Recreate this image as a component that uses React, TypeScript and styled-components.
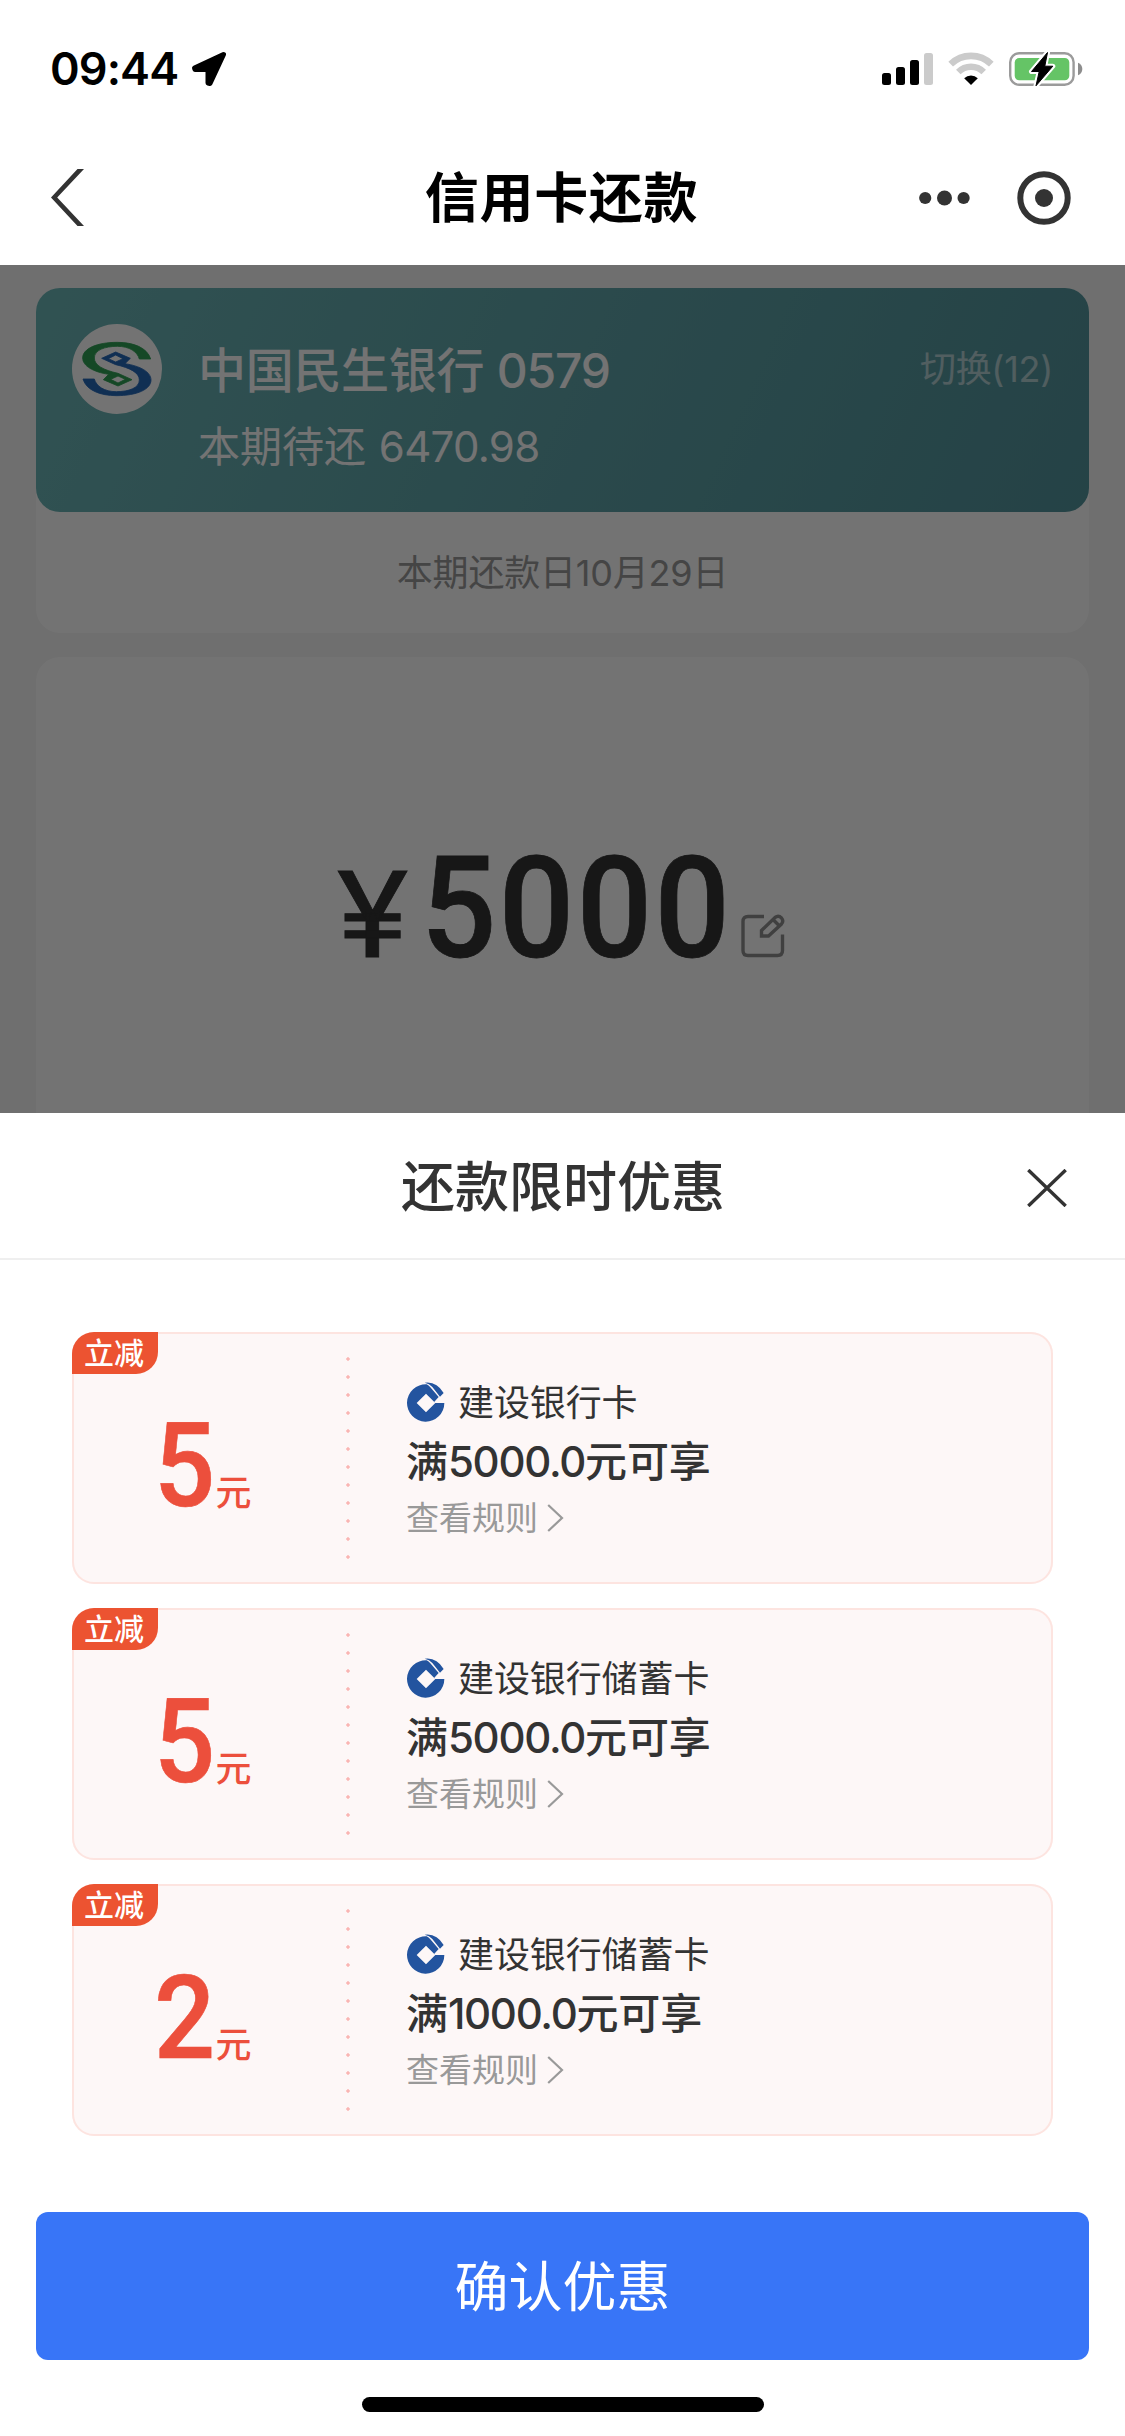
import React from 'react';
import styled, { createGlobalStyle } from 'styled-components';

const GlobalStyle = createGlobalStyle`
  * { box-sizing: border-box; }
  body {
    margin: 0;
    background: #fff;
    font-family: Inter, "Noto Sans CJK SC", sans-serif;
    color: #333;
  }
`;

const Screen = styled.div`
  display: flex;
  flex-direction: column;
  width: 1125px;
  height: 2436px;
  overflow: hidden;
  background: #fff;
`;

/* Status bar */

const StatusBar = styled.header`
  display: flex;
  align-items: center;
  justify-content: space-between;
  height: 138px;
  padding: 0 42px 0 50px;
  color: #000;
`;

const ClockGroup = styled.div`
  display: flex;
  align-items: center;
  gap: 13px;
`;

const Clock = styled.span`
  font-size: 45px;
  font-weight: 600;
  line-height: 54px;
  letter-spacing: -0.9px;
`;

const StatusIcons = styled.div`
  display: flex;
  align-items: center;
  gap: 15px;
`;

/* Navigation bar */

const NavBar = styled.nav`
  display: grid;
  grid-template-columns: 250px 1fr 250px;
  align-items: center;
  height: 127px;
  padding: 0 54px 8px 50px;
`;

const NavTitle = styled.h1`
  margin: 0;
  padding: 3px 0 0 2px;
  text-align: center;
  font-size: 54px;
  font-weight: 600;
  line-height: 72px;
  letter-spacing: 0.7px;
  color: #000;
`;

const NavActions = styled.div`
  display: flex;
  align-items: center;
  justify-content: flex-end;
  gap: 47px;
`;

/* Dimmed page content */

const Content = styled.main`
  position: relative;
  display: flex;
  flex-direction: column;
  gap: 24px;
  height: 848px;
  padding: 23px 36px 0;
  overflow: hidden;
  background: #f5f5f5;
`;

const Mask = styled.div`
  position: absolute;
  inset: 0;
  background: rgba(0, 0, 0, 0.55);
`;

const BillCard = styled.section`
  flex: none;
  height: 345px;
  border-radius: 24px;
  background: #fff;
`;

const BankPanel = styled.div`
  display: flex;
  align-items: flex-start;
  height: 224px;
  padding: 36px 36px 0;
  border-radius: 24px;
  background: linear-gradient(114deg, #6cb6b7 0%, #5fa4a9 50%, #52949c 100%);
  color: #fff;
`;

const BankInfo = styled.div`
  display: flex;
  flex-direction: column;
  flex: 1;
  gap: 21px;
  padding: 17px 0 0 36px;
`;

const Digits = styled.span<{ $tracking: number }>`
  letter-spacing: ${({ $tracking }) => $tracking}px;
`;

const BankName = styled.div`
  font-size: 48px;
  font-weight: 500;
  line-height: 60px;
  letter-spacing: -0.3px;
`;

const DueAmount = styled.div`
  font-size: 42px;
  font-weight: 400;
  line-height: 50px;
  word-spacing: 1px;
`;

const SwitchLink = styled.span`
  padding-top: 21px;
  font-size: 36px;
  line-height: 48px;
  letter-spacing: -0.3px;
  opacity: 0.55;
`;

const DueDate = styled.div`
  display: flex;
  align-items: center;
  justify-content: center;
  height: 121px;
  padding-bottom: 5px;
  font-size: 36px;
  letter-spacing: -0.2px;
  color: #999;
`;

const AmountCard = styled.section`
  display: flex;
  align-items: flex-end;
  flex: none;
  height: 500px;
  padding: 0 0 161px 301px;
  gap: 9px;
  border-radius: 24px;
  background: #fff;
`;

const Amount = styled.div`
  display: flex;
  align-items: baseline;
  font-family: Roboto, sans-serif;
  font-weight: 500;
  line-height: 160px;
  color: #333;
`;

const Yen = styled.span`
  width: 84px;
  font-size: 121px;
  font-weight: 400;
  -webkit-text-stroke: 0.8px currentColor;
  transform: scaleX(1.12);
  transform-origin: left center;
`;

const AmountValue = styled.span`
  margin-right: -20px;
  font-size: 141px;
  letter-spacing: 2.7px;
  -webkit-text-stroke: 0.8px currentColor;
  transform: scaleX(0.94);
  transform-origin: left center;
`;

const EditSlot = styled.span`
  display: flex;
  padding-bottom: 38px;
`;

/* Bottom sheet */

const Sheet = styled.section`
  display: flex;
  flex-direction: column;
  flex: 1;
  background: #fff;
`;

const SheetHeader = styled.div`
  display: grid;
  grid-template-columns: 100px 1fr 100px;
  align-items: center;
  height: 147px;
  padding: 0 58px;
  border-bottom: 2px solid #efefef;
`;

const SheetTitle = styled.h2`
  grid-column: 2;
  margin: 0;
  padding: 5px 0 0 1px;
  text-align: center;
  font-size: 54px;
  font-weight: 500;
  line-height: 72px;
  color: #333;
`;

const CloseButton = styled.button`
  justify-self: end;
  display: flex;
  padding: 4px 0 0;
  border: 0;
  background: none;
`;

const CouponList = styled.ul`
  display: flex;
  flex-direction: column;
  gap: 24px;
  margin: 0;
  padding: 72px 72px 0;
  list-style: none;
`;

const Coupon = styled.li`
  position: relative;
  display: grid;
  grid-template-columns: 276px 1fr;
  height: 252px;
  border-radius: 22px;
  background: #fdf7f7;
  box-shadow: inset 0 0 0 2px #fde4e0;
`;

const Badge = styled.span`
  position: absolute;
  top: 0;
  left: 0;
  width: 86px;
  height: 42px;
  padding-right: 2px;
  border-radius: 22px 0 22px 0;
  background: #ec5331;
  color: #fff;
  font-size: 30px;
  font-weight: 500;
  line-height: 43px;
  text-align: center;
`;

const Discount = styled.div`
  display: flex;
  align-items: baseline;
  height: 252px;
  padding: 74px 0 0 82px;
  color: #ec4f3c;
`;

const DiscountValue = styled.span`
  font-family: Roboto, sans-serif;
  font-size: 117px;
  font-weight: 500;
  line-height: 120px;
  -webkit-text-stroke: 0.6px currentColor;
  transform: scaleX(0.92);
  transform-origin: left center;
`;

const DiscountUnit = styled.span`
  font-size: 36px;
  font-weight: 500;
  margin-left: -5px;
`;

const CouponInfo = styled.div`
  position: relative;
  display: flex;
  flex-direction: column;
  gap: 2px;
  padding: 44px 0 0 58px;
`;

const DottedLine = styled.span`
  position: absolute;
  top: 18px;
  left: -2px;
  width: 4px;
  height: 216px;
  background: radial-gradient(circle at 2px 9px, #fab5b3 1.4px, transparent 2px) 0 0 / 4px 18px;
`;

const CardRow = styled.div`
  display: flex;
  align-items: center;
  gap: 13px;
  padding-left: 1px;
  font-size: 36px;
  line-height: 54px;
  letter-spacing: -0.1px;
  color: #333;

  & > svg {
    margin-bottom: 2px;
  }
`;

const Condition = styled.div`
  font-size: 42px;
  font-weight: 500;
  line-height: 60px;
  letter-spacing: -0.1px;
  color: #333;
`;

const RulesLink = styled.a`
  display: flex;
  align-items: center;
  gap: 9px;
  font-size: 33px;
  line-height: 48px;
  color: #999;
`;

const Footer = styled.footer`
  display: flex;
  flex-direction: column;
  align-items: center;
  gap: 37px;
  margin-top: 76px;
  padding: 0 36px;
`;

const ConfirmButton = styled.button`
  width: 100%;
  height: 148px;
  padding: 0 0 5px;
  border: 0;
  border-radius: 12px;
  background: #3875f7;
  color: #fff;
  font-family: inherit;
  font-size: 54px;
  font-weight: 400;
`;

const HomeIndicator = styled.div`
  width: 402px;
  height: 15px;
  border-radius: 8px;
  background: #000;
`;

/* Icons */

const LocationIcon = () => (
  <svg width="36" height="36" viewBox="0 0 36 36">
    <path
      d="M32.5 3.5 L3.5 17 L4 18.5 H17 V32 L19 32.5 Z"
      fill="#000"
      stroke="#000"
      strokeWidth="5"
      strokeLinejoin="round"
    />
  </svg>
);

const SignalIcon = () => (
  <svg width="51" height="34" viewBox="0 0 51 34">
    <rect x="0" y="21" width="9" height="12" rx="2.5" />
    <rect x="14" y="15" width="9" height="18" rx="2.5" />
    <rect x="28" y="8" width="9" height="25" rx="2.5" />
    <rect x="42" y="1" width="9" height="32" rx="2.5" fill="#cbcbcb" />
  </svg>
);

const WifiIcon = () => (
  <svg width="46" height="34" viewBox="0 0 46 34">
    <path d="M2.7 12.2 A29 29 0 0 1 43.3 12.2" fill="none" stroke="#cbcbcb" strokeWidth="6.6" />
    <path d="M10.3 20 A18 18 0 0 1 35.7 20" fill="none" stroke="#cbcbcb" strokeWidth="6.4" />
    <path d="M23 33 L16.2 26.2 A9.8 9.8 0 0 1 29.8 26.2 Z" />
  </svg>
);

const BATTERY_BOLT = 'M38.5 .5 L22.5 19.5 H30.2 L27 33.8 L43.8 14.2 H35.8 Z';

const BatteryIcon = () => (
  <svg width="74" height="36" viewBox="0 0 74 36">
    <rect x="1.2" y="2.2" width="63.4" height="31.6" rx="9" fill="none" stroke="#9b9b9b" strokeWidth="2.4" />
    <rect x="5.7" y="7" width="54.6" height="22.3" rx="4.5" fill="#65c466" />
    <path d="M69 11.7 Q73.3 13.5 73.3 18 T69 24.3 Z" fill="#8d8d8d" />
    <path d={BATTERY_BOLT} stroke="#fff" strokeWidth="5" strokeLinejoin="round" transform="translate(0 1)" />
    <path d={BATTERY_BOLT} stroke="#000" strokeWidth="1" strokeLinejoin="round" transform="translate(0 1)" />
  </svg>
);

const BackIcon = () => (
  <svg width="34" height="57" viewBox="0 0 34 57" fill="#333">
    <path d="M27.5 0 H34 L7.2 28.5 L34 57 H27.5 L1 28.5 Z" />
  </svg>
);

const MoreIcon = () => (
  <svg width="51" height="16" viewBox="0 0 51 16" fill="#333">
    <circle cx="6.2" cy="8" r="6.1" />
    <circle cx="25.5" cy="8" r="7.5" />
    <circle cx="44.6" cy="8" r="6.1" />
  </svg>
);

const TargetIcon = () => (
  <svg width="54" height="54" viewBox="0 0 54 54">
    <circle cx="27" cy="27" r="23.7" fill="none" stroke="#333" strokeWidth="6" />
    <circle cx="27" cy="27" r="9" fill="#333" />
  </svg>
);

const MINSHENG_STROKE =
  'M272 147 C262 113 220 97 172 97 C110 97 68 116 68 144 C68 168 100 186 146 193 L130 209 L174 228 L216 209 L174 190 C130 180 103 166 103 144 C103 120 135 109 172 109 C208 109 232 125 238 147 Z M174 198 L196 208 L174 219 L152 208 Z';

const MinshengLogo = () => (
  <svg width="90" height="90" viewBox="36 42 270 270">
    <circle cx="171" cy="177" r="135" fill="#fff" />
    <path d={MINSHENG_STROKE} fill="#30a055" stroke="#30a055" strokeWidth="2.5" fillRule="evenodd" />
    <path
      d={MINSHENG_STROKE}
      fill="#2468b8"
      stroke="#2468b8"
      strokeWidth="2.5"
      fillRule="evenodd"
      transform="rotate(180 170.5 177)"
    />
  </svg>
);

const EditIcon = () => (
  <svg width="44" height="44" viewBox="0 0 44 44" fill="none" stroke="#8f8f8f" strokeWidth="3.4">
    <path d="M23 2.5 H7 Q2 2.5 2 7.5 V36.500 Q2 41.500 7 41.500 H36.500 Q41.500 41.500 41.500 36.500 V20.500" />
    <path d="M20.500 22 V16.500 L34 3.500 Q37.500 1 40.500 4 Q43 7 40.500 10 L27.500 22 Z" />
    <path d="M32.500 6 L38 11.500" />
  </svg>
);

const CloseIcon = () => (
  <svg width="40" height="38" viewBox="0 0 40 38" stroke="#333" strokeWidth="3.4">
    <path d="M1.300 1 L38.700 37 M38.700 1 L1.300 37" />
  </svg>
);

const CcbLogo = () => (
  <svg width="38" height="40" viewBox="-1 -1 114 120" fill="#23549f">
    <path
      fillRule="evenodd"
      d="M58 6 A56 56 0 1 0 111 62 L84 62 L81 58 L94 44 L69 15 Q64 9 58 6 Z M56 34 L84 62 L56 90 L28 62 Z"
    />
    <path d="M52 1 Q88 -4 109 32 L98 43 L75 14 Q66 4 52 1 Z" />
  </svg>
);

const ChevronIcon = () => (
  <svg width="17" height="28" viewBox="0 0 17 28" fill="none" stroke="#999" strokeWidth="2.2">
    <path d="M1.200 1 L15 14 L1.200 27" />
  </svg>
);

type Offer = { value: number; card: string; threshold: string };

const offers: Offer[] = [
  { value: 5, card: '建设银行卡', threshold: '5000.0' },
  { value: 5, card: '建设银行储蓄卡', threshold: '5000.0' },
  { value: 2, card: '建设银行储蓄卡', threshold: '1000.0' },
];

export default function App() {
  return (
    <Screen>
      <GlobalStyle />
      <StatusBar>
        <ClockGroup>
          <Clock>09:44</Clock>
          <LocationIcon />
        </ClockGroup>
        <StatusIcons>
          <SignalIcon />
          <WifiIcon />
          <BatteryIcon />
        </StatusIcons>
      </StatusBar>
      <NavBar>
        <BackIcon />
        <NavTitle>信用卡还款</NavTitle>
        <NavActions>
          <MoreIcon />
          <TargetIcon />
        </NavActions>
      </NavBar>
      <Content>
        <BillCard>
          <BankPanel>
            <MinshengLogo />
            <BankInfo>
              <BankName>
                中国民生银行 <Digits $tracking={-1.2}>0579</Digits>
              </BankName>
              <DueAmount>
                本期待还 <Digits $tracking={-0.7}>6470.98</Digits>
              </DueAmount>
            </BankInfo>
            <SwitchLink>切换(12)</SwitchLink>
          </BankPanel>
          <DueDate>本期还款日10月29日</DueDate>
        </BillCard>
        <AmountCard>
          <Amount>
            <Yen>¥</Yen>
            <AmountValue>5000</AmountValue>
          </Amount>
          <EditSlot>
            <EditIcon />
          </EditSlot>
        </AmountCard>
        <Mask />
      </Content>
      <Sheet>
        <SheetHeader>
          <SheetTitle>还款限时优惠</SheetTitle>
          <CloseButton aria-label="关闭">
            <CloseIcon />
          </CloseButton>
        </SheetHeader>
        <CouponList>
          {offers.map((offer, index) => (
            <Coupon key={index}>
              <Discount>
                <DiscountValue>{offer.value}</DiscountValue>
                <DiscountUnit>元</DiscountUnit>
              </Discount>
              <CouponInfo>
                <DottedLine />
                <CardRow>
                  <CcbLogo />
                  {offer.card}
                </CardRow>
                <Condition>
                  满<Digits $tracking={-1.3}>{offer.threshold}</Digits>元可享
                </Condition>
                <RulesLink>
                  查看规则
                  <ChevronIcon />
                </RulesLink>
              </CouponInfo>
              <Badge>立减</Badge>
            </Coupon>
          ))}
        </CouponList>
        <Footer>
          <ConfirmButton>确认优惠</ConfirmButton>
          <HomeIndicator />
        </Footer>
      </Sheet>
    </Screen>
  );
}
